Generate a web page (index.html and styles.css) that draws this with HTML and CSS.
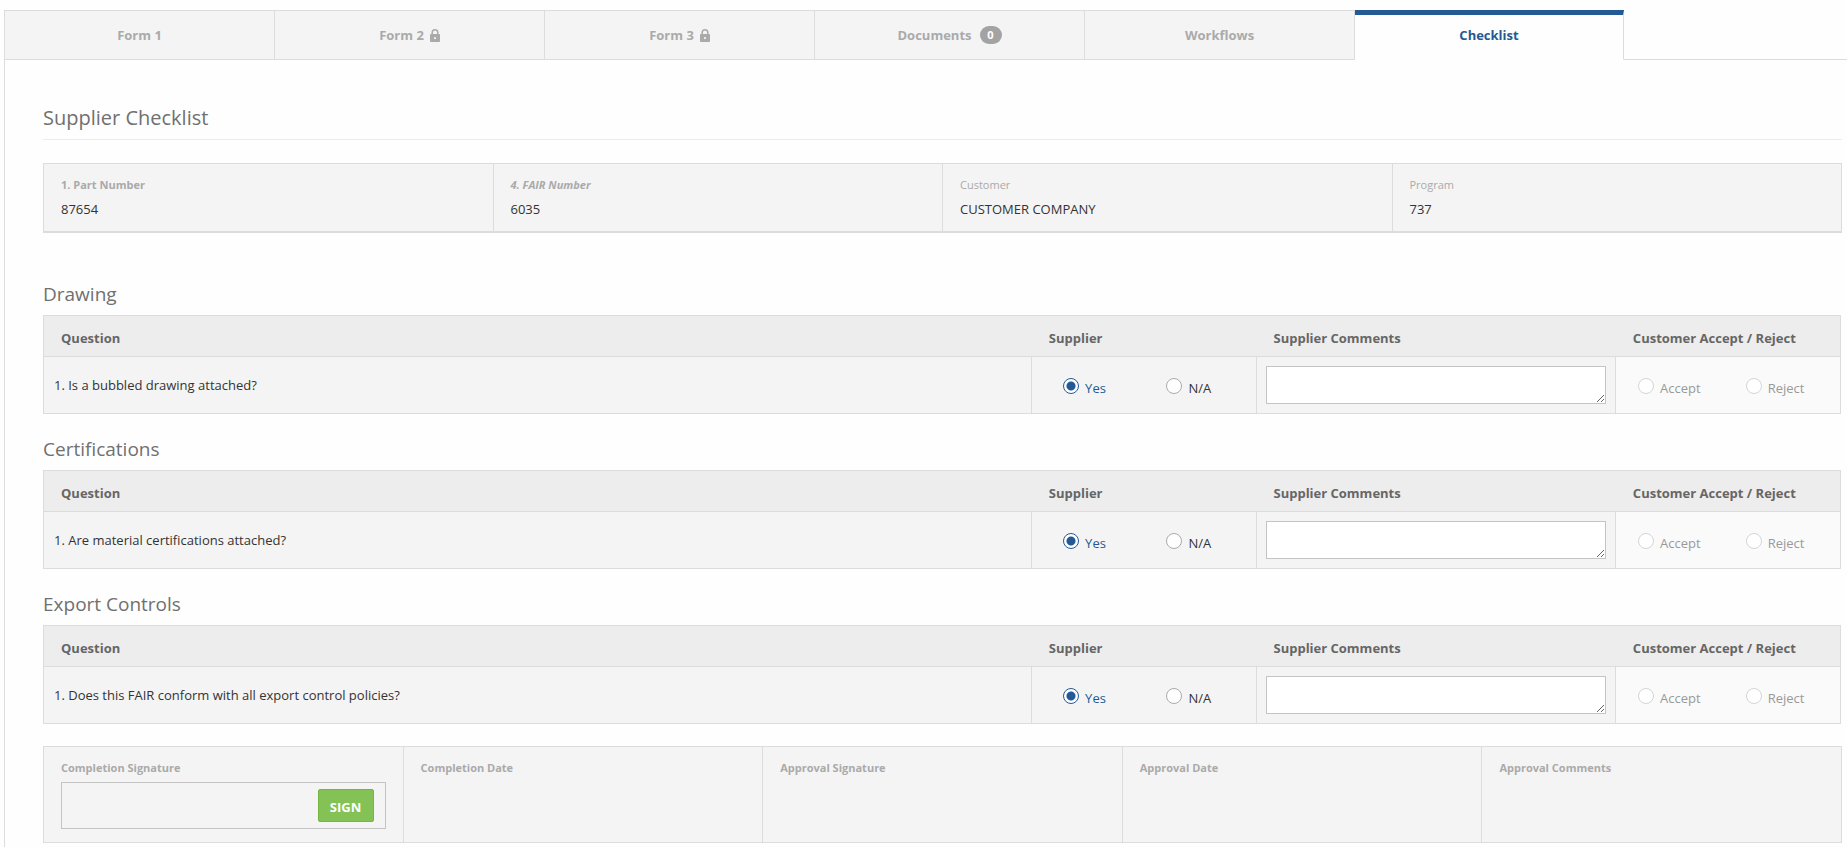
FILE: index.html
```html
<!doctype html>
<html lang="en">

<head>
    <title>Supplier Checklist</title>
    <meta charset="UTF-8">
    <link rel="stylesheet" href="styles.css">
</head>

<body>
    <div class="page">
        <nav class="tabs">
            <a class="tab" href="#form1">Form 1</a>
            <a class="tab" href="#form2">Form 2
                <svg class="lock" viewBox="0 0 10 13"><path d="M2.2 6V3.6a2.8 2.8 0 0 1 5.6 0V6" fill="none" stroke="currentColor" stroke-width="1.5"/><path fill="currentColor" fill-rule="evenodd" d="M1 5h8a1 1 0 0 1 1 1v6a1 1 0 0 1-1 1H1a1 1 0 0 1-1-1V6a1 1 0 0 1 1-1zm4 3a1.1 1.1 0 1 0 0 2.200a1.100 1.100 0 1 0 0-2.200z"/></svg>
            </a>
            <a class="tab" href="#form3">Form 3
                <svg class="lock" viewBox="0 0 10 13"><path d="M2.2 6V3.6a2.8 2.8 0 0 1 5.6 0V6" fill="none" stroke="currentColor" stroke-width="1.5"/><path fill="currentColor" fill-rule="evenodd" d="M1 5h8a1 1 0 0 1 1 1v6a1 1 0 0 1-1 1H1a1 1 0 0 1-1-1V6a1 1 0 0 1 1-1zm4 3a1.1 1.1 0 1 0 0 2.200a1.100 1.100 0 1 0 0-2.200z"/></svg>
            </a>
            <a class="tab" href="#documents">Documents <span class="badge">0</span></a>
            <a class="tab" href="#workflows">Workflows</a>
            <a class="tab active" href="#checklist">Checklist</a>
            <div class="tabs-rest"></div>
        </nav>

        <main class="content">
            <h1>Supplier Checklist</h1>

            <div class="info">
                <div class="cell">
                    <div class="label">1. Part Number</div>
                    <div class="value">87654</div>
                </div>
                <div class="cell">
                    <div class="label italic">4. FAIR Number</div>
                    <div class="value">6035</div>
                </div>
                <div class="cell">
                    <div class="label light">Customer</div>
                    <div class="value">CUSTOMER COMPANY</div>
                </div>
                <div class="cell">
                    <div class="label light">Program</div>
                    <div class="value">737</div>
                </div>
            </div>

            <h2>Drawing</h2>
            <table class="checklist">
                <thead>
                    <tr>
                        <th class="col-question">Question</th>
                        <th class="col-supplier">Supplier</th>
                        <th class="col-comments">Supplier Comments</th>
                        <th class="col-customer">Customer Accept / Reject</th>
                    </tr>
                </thead>
                <tbody>
                    <tr>
                        <td class="question">1. Is a bubbled drawing attached?</td>
                        <td>
                            <div class="options">
                                <label><input type="radio" name="drawing" checked><span>Yes</span></label>
                                <label><input type="radio" name="drawing"><span>N/A</span></label>
                            </div>
                        </td>
                        <td class="comments"><textarea aria-label="Supplier Comments"></textarea></td>
                        <td class="disabled">
                            <div class="options">
                                <label><input type="radio" name="drawing-customer" disabled><span>Accept</span></label>
                                <label><input type="radio" name="drawing-customer" disabled><span>Reject</span></label>
                            </div>
                        </td>
                    </tr>
                </tbody>
            </table>

            <h2>Certifications</h2>
            <table class="checklist">
                <thead>
                    <tr>
                        <th class="col-question">Question</th>
                        <th class="col-supplier">Supplier</th>
                        <th class="col-comments">Supplier Comments</th>
                        <th class="col-customer">Customer Accept / Reject</th>
                    </tr>
                </thead>
                <tbody>
                    <tr>
                        <td class="question">1. Are material certifications attached?</td>
                        <td>
                            <div class="options">
                                <label><input type="radio" name="cert" checked><span>Yes</span></label>
                                <label><input type="radio" name="cert"><span>N/A</span></label>
                            </div>
                        </td>
                        <td class="comments"><textarea aria-label="Supplier Comments"></textarea></td>
                        <td class="disabled">
                            <div class="options">
                                <label><input type="radio" name="cert-customer" disabled><span>Accept</span></label>
                                <label><input type="radio" name="cert-customer" disabled><span>Reject</span></label>
                            </div>
                        </td>
                    </tr>
                </tbody>
            </table>

            <h2>Export Controls</h2>
            <table class="checklist">
                <thead>
                    <tr>
                        <th class="col-question">Question</th>
                        <th class="col-supplier">Supplier</th>
                        <th class="col-comments">Supplier Comments</th>
                        <th class="col-customer">Customer Accept / Reject</th>
                    </tr>
                </thead>
                <tbody>
                    <tr>
                        <td class="question">1. Does this FAIR conform with all export control policies?</td>
                        <td>
                            <div class="options">
                                <label><input type="radio" name="export" checked><span>Yes</span></label>
                                <label><input type="radio" name="export"><span>N/A</span></label>
                            </div>
                        </td>
                        <td class="comments"><textarea aria-label="Supplier Comments"></textarea></td>
                        <td class="disabled">
                            <div class="options">
                                <label><input type="radio" name="export-customer" disabled><span>Accept</span></label>
                                <label><input type="radio" name="export-customer" disabled><span>Reject</span></label>
                            </div>
                        </td>
                    </tr>
                </tbody>
            </table>

            <div class="signatures">
                <div class="cell">
                    <div class="label">Completion Signature</div>
                    <div class="sign-box"><button type="button" class="sign">SIGN</button></div>
                </div>
                <div class="cell">
                    <div class="label">Completion Date</div>
                </div>
                <div class="cell">
                    <div class="label">Approval Signature</div>
                </div>
                <div class="cell">
                    <div class="label">Approval Date</div>
                </div>
                <div class="cell">
                    <div class="label">Approval Comments</div>
                </div>
            </div>
        </main>
    </div>
</body>

</html>
```
FILE: styles.css
```css
* {
    box-sizing: border-box;
}

body {
    margin: 0;
    background: #fefefe;
    color: #333;
    font-family: "Open Sans", "Noto Sans", sans-serif;
    font-size: 13px;
    line-height: 18px;
}

.page {
    margin: 10px 0 0 4px;
    border-left: 1px solid #dcdcdc;
}

/* tabs */
.tabs {
    display: flex;
    height: 50px;
}

.tab {
    display: flex;
    align-items: center;
    justify-content: center;
    width: 270px;
    border: 1px solid #dcdcdc;
    border-left: 0;
    background: #f4f4f4;
    color: #aaa;
    font-weight: bold;
    text-decoration: none;
}

.tab.active {
    width: 269px;
    border-top: 5px solid #235a95;
    border-bottom-color: #fefefe;
    padding-bottom: 4px;
    background: #fefefe;
    color: #235a95;
}

.tabs-rest {
    flex: 1;
    border-bottom: 1px solid #dcdcdc;
}

.lock {
    width: 10px;
    height: 13px;
    margin-left: 6px;
}

.badge {
    width: 22px;
    margin-left: 8px;
    border-radius: 9px;
    background: #a3a3a3;
    color: #fff;
    font-size: 11px;
    text-align: center;
}

.content {
    padding: 43px 5px 5px 38px;
}

h1, h2 {
    margin: 0;
    color: #707070;
    font-size: 20px;
    font-weight: normal;
    line-height: 30px;
}

h1 {
    padding-bottom: 6px;
    border-bottom: 1px solid #ececec;
}

h2 {
    padding-bottom: 6px;
    margin-top: 20px;
    font-size: 19px;
}

/* boxes with the part data and signatures */
.info, .signatures {
    display: flex;
    border: 1px solid #dcdcdc;
    background: #f4f4f4;
}

.info {
    height: 70px;
    margin: 23px 0 46px;
    border-bottom-width: 2px;
}

.signatures {
    height: 97px;
    margin-top: 22px;
}

.cell {
    flex: 1;
    padding: 12px 17px;
    border-right: 1px solid #dcdcdc;
}

.cell:last-child {
    border-right: 0;
}

.label {
    color: #aaa;
    font-size: 11px;
    font-weight: bold;
}

.italic {
    font-style: italic;
}

.light {
    font-weight: normal;
}

.value {
    margin-top: 6px;
}

/* question tables */
.checklist {
    width: calc(100% - 1px);
    table-layout: fixed;
    border-collapse: collapse;
    border: 1px solid #dcdcdc;
    background: #f4f4f4;
}

.checklist th {
    height: 41px;
    padding: 4px 17px 0;
    border-bottom: 1px solid #dcdcdc;
    background: #ededed;
    color: #666;
    text-align: left;
    white-space: nowrap;
}

.col-question {
    width: 55%;
}

.col-supplier, .col-customer {
    width: 12.5%;
}

.col-comments {
    width: 20%;
}

.checklist td {
    height: 57px;
    padding: 0;
    border-right: 1px solid #dcdcdc;
}

.checklist .question {
    padding-left: 10px;
}

.checklist .comments {
    padding: 0 9px;
}

.checklist .disabled {
    background: #fafafa;
}

textarea {
    display: block;
    width: 100%;
    height: 38px;
    border: 1px solid #c4c4c4;
    background: #fff;
    font: inherit;
}

.options {
    display: grid;
    grid-template-columns: 1fr 1fr;
    justify-items: center;
    padding: 2px 15px 0 0;
}

.disabled .options {
    padding-right: 12px;
}

.options label {
    display: flex;
    align-items: center;
}

.options span {
    padding-top: 4px;
}

.options input {
    appearance: none;
    width: 16px;
    height: 16px;
    margin: 0 6px 0 0;
    border: 1px solid #aaa;
    border-radius: 50%;
    background: #fff;
}

.options input:checked {
    border-color: #235a95;
    background: radial-gradient(circle, #235a95 4px, #fff 5px);
}

.options input:checked + span {
    color: #235a95;
}

.options input:disabled {
    border-color: #d5d5d5;
}

.options input:disabled + span {
    color: #999;
}

.sign-box {
    display: flex;
    align-items: center;
    justify-content: flex-end;
    height: 47px;
    margin-top: 5px;
    padding-right: 11px;
    border: 1px solid #c4c4c4;
}

.sign {
    width: 56px;
    height: 33px;
    padding: 3px 0 0;
    border: 1px solid #76b543;
    border-radius: 2px;
    background: #84c255;
    color: #fff;
    font: bold 13px "Open Sans", "Noto Sans", sans-serif;
}
```
